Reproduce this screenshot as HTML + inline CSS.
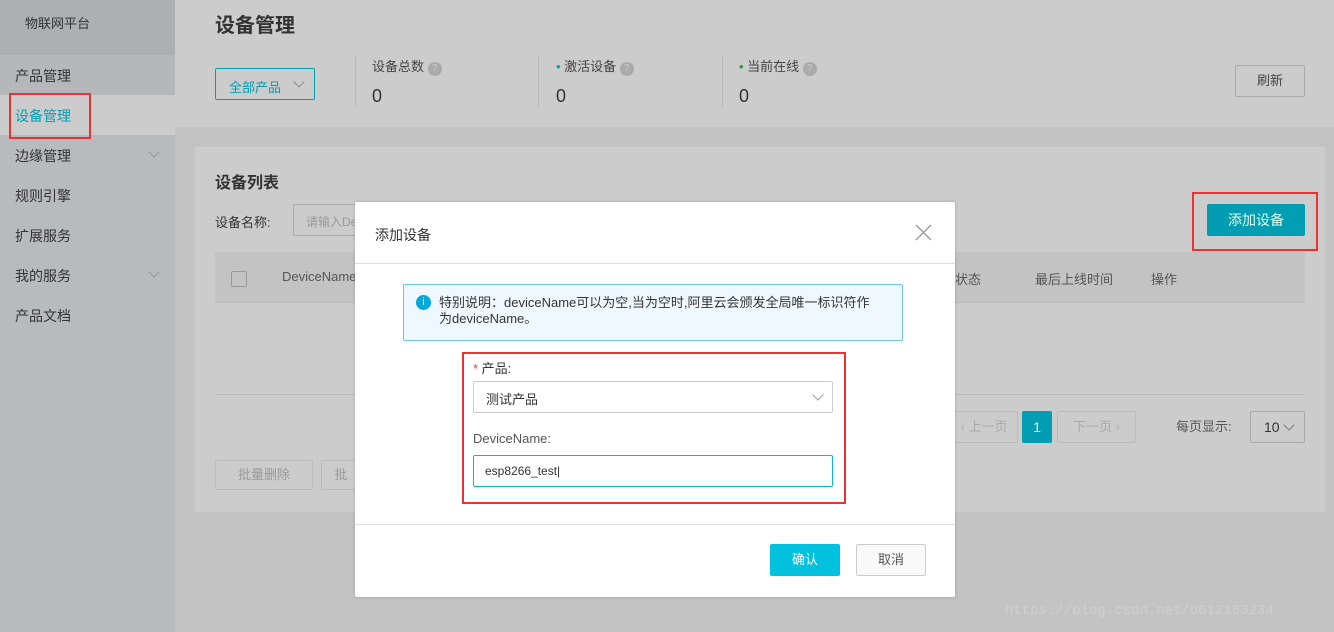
<!DOCTYPE html>
<html><head><meta charset="utf-8"><style>
*{box-sizing:border-box;margin:0;padding:0}
body{width:1334px;height:632px;overflow:hidden;position:relative;background:#c3c3c3;font-family:"Liberation Sans","Noto Sans CJK SC",sans-serif;font-size:14px;color:#333}
.a{position:absolute}
.side{left:0;top:0;width:175px;height:632px;background:#b8babd}
.side .logo{left:0;top:0;width:175px;height:55px;background:#adb0b3;font-size:13px;color:#333;padding:13px 0 0 25px}
.mi{left:15px;font-size:14px;color:#333}
.chev{width:8px;height:8px;border-right:1px solid #999;border-bottom:1px solid #999;transform:rotate(45deg)}
.btn{border:1px solid #aaa;border-radius:2px;text-align:center;font-size:13px}
</style></head><body>
<div class="a side">
 <div class="a logo">物联网平台</div>
 <div class="a" style="left:0;top:55px;width:175px;height:40px;background:#b5b8bb"></div>
 <div class="a" style="left:0;top:95px;width:175px;height:40px;background:#cccccc"></div>
 <div class="a mi" style="top:66px">产品管理</div>
 <div class="a mi" style="top:106px;color:#00a0b4">设备管理</div>
 <div class="a" style="left:9px;top:93px;width:82px;height:46px;border:2px solid #f03030"></div>
 <div class="a mi" style="top:146px">边缘管理</div><div class="a chev" style="left:150px;top:148px"></div>
 <div class="a mi" style="top:186px">规则引擎</div>
 <div class="a mi" style="top:226px">扩展服务</div>
 <div class="a mi" style="top:266px">我的服务</div><div class="a chev" style="left:150px;top:268px"></div>
 <div class="a mi" style="top:306px">产品文档</div>
</div>
<div class="a" style="left:175px;top:0;width:1159px;height:127px;background:#cccccc"></div>
<div class="a" style="left:215px;top:9px;font-size:20px;font-weight:bold;color:#333">设备管理</div>
<div class="a" style="left:215px;top:68px;width:100px;height:32px;border:1px solid #00a0b4;border-radius:2px;color:#00a0b4;font-size:13px;padding:8px 0 0 13px">全部产品</div>
<div class="a chev" style="left:295px;top:78px;border-color:#888"></div>
<div class="a" style="left:355px;top:55px;width:1px;height:52px;background:#bbb"></div>
<div class="a" style="left:538px;top:55px;width:1px;height:52px;background:#bbb"></div>
<div class="a" style="left:722px;top:55px;width:1px;height:52px;background:#bbb"></div>
<div class="a" style="left:372px;top:56px;font-size:13px;color:#444">设备总数 <span style="display:inline-block;width:14px;height:14px;border-radius:50%;background:#aaa;color:#ccc;font-size:10px;text-align:center;line-height:14px">?</span></div>
<div class="a" style="left:556px;top:56px;font-size:13px;color:#444"><span style="color:#00a0b4">•</span> 激活设备 <span style="display:inline-block;width:14px;height:14px;border-radius:50%;background:#aaa;color:#ccc;font-size:10px;text-align:center;line-height:14px">?</span></div>
<div class="a" style="left:739px;top:56px;font-size:13px;color:#444"><span style="color:#1a9a3a">•</span> 当前在线 <span style="display:inline-block;width:14px;height:14px;border-radius:50%;background:#aaa;color:#ccc;font-size:10px;text-align:center;line-height:14px">?</span></div>
<div class="a" style="left:372px;top:86px;font-size:18px">0</div>
<div class="a" style="left:556px;top:86px;font-size:18px">0</div>
<div class="a" style="left:739px;top:86px;font-size:18px">0</div>
<div class="a btn" style="left:1235px;top:65px;width:70px;height:32px;line-height:30px;color:#444">刷新</div>
<div class="a" style="left:195px;top:147px;width:1130px;height:365px;background:#cccccc"></div>
<div class="a" style="left:215px;top:169px;font-size:16px;font-weight:bold">设备列表</div>
<div class="a" style="left:215px;top:212px;font-size:13px">设备名称:</div>
<div class="a" style="left:293px;top:204px;width:80px;height:32px;border:1px solid #aaa;border-radius:2px;font-size:12px;color:#999;padding:8px 0 0 12px">请输入De</div>
<div class="a" style="left:1207px;top:204px;width:98px;height:32px;background:#009db3;border-radius:2px;color:#dfe;font-size:14px;text-align:center;line-height:32px">添加设备</div>
<div class="a" style="left:1192px;top:192px;width:126px;height:59px;border:2px solid #f03030"></div>
<div class="a" style="left:215px;top:252px;width:1090px;height:51px;background:#c3c3c3;border-bottom:1px solid #bbb"></div>
<div class="a" style="left:231px;top:271px;width:16px;height:16px;border:1px solid #999;border-radius:2px"></div>
<div class="a" style="left:282px;top:269px;font-size:13px;color:#555">DeviceName</div>
<div class="a" style="left:955px;top:269px;font-size:13px;color:#555">状态</div>
<div class="a" style="left:1035px;top:269px;font-size:13px;color:#555">最后上线时间</div>
<div class="a" style="left:1151px;top:269px;font-size:13px;color:#555">操作</div>
<div class="a" style="left:215px;top:394px;width:1090px;height:1px;background:#bbb"></div>
<div class="a btn" style="left:950px;top:411px;width:68px;height:32px;line-height:30px;color:#aaa;border-color:#bbb">‹ 上一页</div>
<div class="a" style="left:1022px;top:411px;width:30px;height:32px;background:#009db3;color:#dfe;text-align:center;line-height:32px;border-radius:2px">1</div>
<div class="a btn" style="left:1057px;top:411px;width:79px;height:32px;line-height:30px;color:#aaa;border-color:#bbb">下一页 ›</div>
<div class="a" style="left:1176px;top:416px;font-size:13px;color:#555">每页显示:</div>
<div class="a btn" style="left:1250px;top:411px;width:55px;height:32px;line-height:30px;text-align:left;padding-left:13px;font-size:14px">10</div>
<div class="a chev" style="left:1285px;top:421px;border-color:#777"></div>
<div class="a btn" style="left:215px;top:460px;width:98px;height:30px;line-height:28px;color:#999;border-color:#bbb">批量删除</div>
<div class="a btn" style="left:321px;top:460px;width:40px;height:30px;line-height:28px;color:#999;border-color:#bbb">批</div>
<!-- modal -->
<div class="a" style="left:355px;top:202px;width:600px;height:395px;background:#fff;border-radius:2px;box-shadow:0 0 3px rgba(0,0,0,.2)">
 <div class="a" style="left:20px;top:23px;font-size:14px;color:#333">添加设备</div>
 <svg class="a" style="left:560px;top:22px" width="17" height="17"><path d="M1 1L16 16M16 1L1 16" stroke="#999" stroke-width="1.3"/></svg>
 <div class="a" style="left:0;top:61px;width:600px;height:1px;background:#ddd"></div>
 <div class="a" style="left:48px;top:82px;width:500px;height:57px;background:#f0f8ff;border:1px solid #6cc2f0;border-radius:2px"></div>
 <div class="a" style="left:61px;top:93px;width:15px;height:15px;border-radius:50%;background:#00a9d8;color:#fff;font-size:11px;text-align:center;line-height:15px">i</div>
 <div class="a" style="left:84px;top:93px;width:436px;font-size:13px;line-height:16px;color:#333;word-break:break-all">特别说明：deviceName可以为空,当为空时,阿里云会颁发全局唯一标识符作为deviceName。</div>
 <div class="a" style="left:118px;top:156px;font-size:13px;color:#333"><span style="color:#f04030">*</span> 产品:</div>
 <div class="a" style="left:118px;top:179px;width:360px;height:32px;border:1px solid #ccc;border-radius:2px;padding:7px 0 0 12px;font-size:13px">测试产品</div>
 <div class="a chev" style="left:459px;top:189px;border-color:#999"></div>
 <div class="a" style="left:118px;top:229px;font-size:13px;color:#555">DeviceName:</div>
 <div class="a" style="left:118px;top:253px;width:360px;height:32px;border:1px solid #00bcd8;border-radius:2px;padding:8px 0 0 11px;font-size:12px;color:#333">esp8266_test|</div>
 <div class="a" style="left:107px;top:150px;width:384px;height:152px;border:2px solid #f03030"></div>
 <div class="a" style="left:0;top:322px;width:600px;height:1px;background:#ddd"></div>
 <div class="a" style="left:415px;top:342px;width:70px;height:32px;background:#00c1de;border-radius:2px;color:#fff;font-size:13px;text-align:center;line-height:32px">确认</div>
 <div class="a btn" style="left:501px;top:342px;width:70px;height:32px;line-height:30px;border-color:#ccc;color:#555;background:#f9f9f9">取消</div>
</div>
<div class="a" style="left:1005px;top:603px;font-family:'Liberation Mono',monospace;font-size:14px;color:#d0d0d0">https://blog.csdn.net/u012163234</div>
</body></html>
